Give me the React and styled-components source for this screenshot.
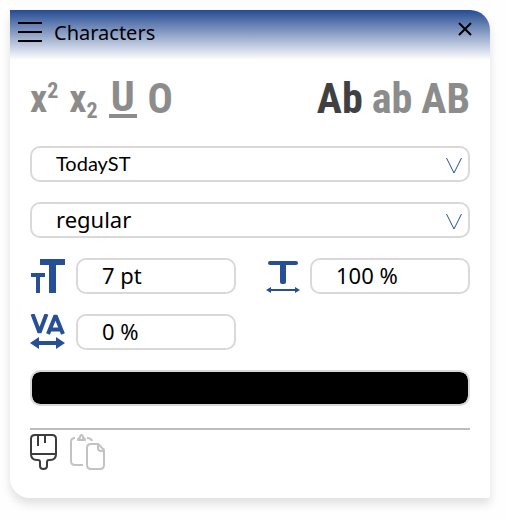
import React, { useState } from 'react'
import styled, { createGlobalStyle } from 'styled-components'

const GlobalStyle = createGlobalStyle`
  * {
    box-sizing: border-box;
  }

  body {
    margin: 0;
    padding: 10px 16px 22px 10px;
    background: #fefefe;
    font-family: 'Noto Sans', sans-serif;
  }

  button, input, select {
    font-family: inherit;
    margin: 0;
  }
`

const Panel = styled.section`
  background: white;
  border-radius: 0 20px 2px 20px;
  box-shadow: 0 6px 10px rgba(0, 0, 0, 0.12);
  overflow: hidden;
`

const Header = styled.header`
  display: flex;
  align-items: flex-start;
  height: 50px;
  padding: 8px 16px 0 8px;
  background: linear-gradient(#254b93, #ffffff);
`

const IconButton = styled.button`
  display: flex;
  padding: 0;
  border: none;
  background: none;
  cursor: pointer;
`

const Title = styled.h1`
  flex: 1;
  margin: 0;
  padding-left: 12px;
  font-size: 20px;
  font-weight: 400;
  line-height: 30px;
  color: black;
`

const Body = styled.div`
  display: flex;
  flex-direction: column;
  gap: 20px;
  padding: 20px 20px 28px;
`

const Toolbar = styled.div`
  display: flex;
  justify-content: space-between;
  height: 46px;
`

const Group = styled.div`
  display: flex;
  align-items: flex-start;
  gap: ${props => props.$gap};
`

const FormatButton = styled.button`
  height: 38px;
  padding: 0;
  border: none;
  background: none;
  font-family: 'Roboto Condensed', Roboto, sans-serif;
  font-size: ${props => (props.$small ? '38px' : '42px')};
  font-weight: 700;
  line-height: 34px;
  white-space: nowrap;
  color: ${props => (props.$active ? '#404040' : '#8c8c8c')};
  cursor: pointer;

  sup, sub {
    font-size: 22px;
    line-height: 0;
  }

  sup {
    vertical-align: 14px;
  }

  sub {
    vertical-align: -6px;
  }
`

const Underlined = styled.span`
  display: block;
  height: 38px;
  padding: 0 2px;
  border-bottom: 4px solid #8c8c8c;
`

const SelectBox = styled.div`
  position: relative;

  svg {
    position: absolute;
    top: 11px;
    right: 7px;
    pointer-events: none;
  }
`

const Select = styled.select`
  display: block;
  width: 100%;
  height: 36px;
  padding: 0 30px 2px 24px;
  appearance: none;
  border: 2px solid #dcd8da;
  border-radius: 10px;
  background: white;
  font-family: ${props => props.$face || 'inherit'};
  font-size: ${props => (props.$face ? '20px' : '22px')};
  color: black;
`

const Fields = styled.div`
  display: grid;
  grid-template-columns: 1fr 1fr;
  gap: 20px 28px;
`

const Field = styled.label`
  display: flex;
  align-items: center;
  gap: 10px;

  svg {
    flex: none;
  }
`

const Input = styled.input`
  width: 100%;
  min-width: 0;
  height: 36px;
  padding: 0 12px 2px 24px;
  border: 2px solid #dcd8da;
  border-radius: 10px;
  background: white;
  font-size: 22px;
  color: black;
`

const Swatch = styled.input`
  display: block;
  width: 100%;
  height: 36px;
  padding: 0;
  appearance: none;
  border: 2px solid #dcd8da;
  border-radius: 10px;
  background: none;
  overflow: hidden;

  &::-webkit-color-swatch-wrapper {
    padding: 0;
  }

  &::-webkit-color-swatch {
    border: none;
    border-radius: 8px;
  }
`

const Footer = styled.footer`
  display: flex;
  gap: 12px;
  margin-top: 2px;
  padding-top: 4px;
  border-top: 2px solid #bdbdbd;
`

const blue = '#264f96'

const MenuIcon = () => (
  <svg width="24" height="28" stroke="black" strokeWidth="2">
    <path d="M0 5h24M0 14h24M0 23h24" />
  </svg>
)

const CloseIcon = () => (
  <svg width="18" height="22" stroke="black" strokeWidth="2">
    <path d="M3 5l12 12M15 5L3 17" />
  </svg>
)

const ArrowIcon = () => (
  <svg width="18" height="18" fill="none" stroke={blue} strokeWidth="1">
    <path d="M1.500 1L9 16L16.500 1" />
  </svg>
)

const SizeIcon = () => (
  <svg width="36" height="36" fill={blue}>
    <path d="M10 1h25v6h-9v28h-7V7h-9z" />
    <path d="M1 15h14v4h-5v16H6V19H1z" />
  </svg>
)

const WidthIcon = () => (
  <svg width="36" height="36" fill={blue}>
    <rect x="4" y="3" width="30" height="4" rx="2" />
    <rect x="16" y="4" width="6" height="22" rx="2" />
    <path d="M2 32l5-3v2h24v-2l5 3l-5 3v-2H7v2z" />
  </svg>
)

const SpacingIcon = () => (
  <svg width="36" height="36" fill="none" stroke={blue} strokeWidth="4" strokeLinejoin="bevel">
    <path d="M2.500 0L9.500 18.500L16.500 0M18 20L25.500 1.500L33 20M21 15.500h9" />
    <path
      d="M0 29l9-6v4h17v-4l9 6l-9 6v-4H9v4z"
      fill={blue}
      stroke="none"
    />
  </svg>
)

const BrushIcon = () => (
  <svg width="28" height="36" fill="none" stroke="#3c3c3c" strokeWidth="2" strokeLinejoin="round">
    <path d="M5 1h17q4 0 4 4v15q0 6-6 6h-1q-2 0-2 2v4q0 3-3.500 3t-3.500-3v-4q0-2-2-2H7q-6 0-6-6V5q0-4 4-4z" />
    <path d="M1 20h25M8 1v11M15 1v8" />
  </svg>
)

const PasteIcon = () => (
  <svg width="36" height="36" fill="none" stroke="#c2c2c2" strokeWidth="2" strokeLinejoin="round">
    <path d="M5 4Q1 4 1 8v19q0 4 4 4h8M17 4q4 0 5 3" />
    <path d="M8 6q0-2 2-2q0-3 1.500-3t1.500 3q2 0 2 2z" />
    <path d="M21 10h7l6 6v15q0 4-4 4H21q-4 0-4-4V14q0-4 4-4zM28 10v4q0 3 3 3h3" />
  </svg>
)

const App = () => {
  const [letterCase, setLetterCase] = useState('Ab')

  return (
    <>
      <GlobalStyle />
      <Panel>
        <Header>
          <IconButton aria-label="Menu"><MenuIcon /></IconButton>
          <Title>Characters</Title>
          <IconButton aria-label="Close"><CloseIcon /></IconButton>
        </Header>

        <Body>
          <Toolbar>
            <Group $gap="11px">
              <FormatButton $small>x<sup>2</sup></FormatButton>
              <FormatButton $small>x<sub>2</sub></FormatButton>
              <FormatButton><Underlined>U</Underlined></FormatButton>
              <FormatButton>O</FormatButton>
            </Group>
            <Group $gap="9px">
              {['Ab', 'ab', 'AB'].map(name => (
                <FormatButton
                  key={name}
                  $active={name === letterCase}
                  onClick={() => setLetterCase(name)}
                >
                  {name}
                </FormatButton>
              ))}
            </Group>
          </Toolbar>

          <SelectBox>
            <Select aria-label="Font" $face="Lato, sans-serif">
              <option>TodayST</option>
            </Select>
            <ArrowIcon />
          </SelectBox>
          <SelectBox>
            <Select aria-label="Style">
              <option>regular</option>
            </Select>
            <ArrowIcon />
          </SelectBox>

          <Fields>
            <Field>
              <SizeIcon />
              <Input aria-label="Font size" defaultValue="7 pt" />
            </Field>
            <Field>
              <WidthIcon />
              <Input aria-label="Width" defaultValue="100 %" />
            </Field>
            <Field>
              <SpacingIcon />
              <Input aria-label="Spacing" defaultValue="0 %" />
            </Field>
          </Fields>

          <Swatch type="color" aria-label="Color" defaultValue="#000000" />

          <Footer>
            <IconButton aria-label="Copy format"><BrushIcon /></IconButton>
            <IconButton aria-label="Paste format"><PasteIcon /></IconButton>
          </Footer>
        </Body>
      </Panel>
    </>
  )
}

export default App
